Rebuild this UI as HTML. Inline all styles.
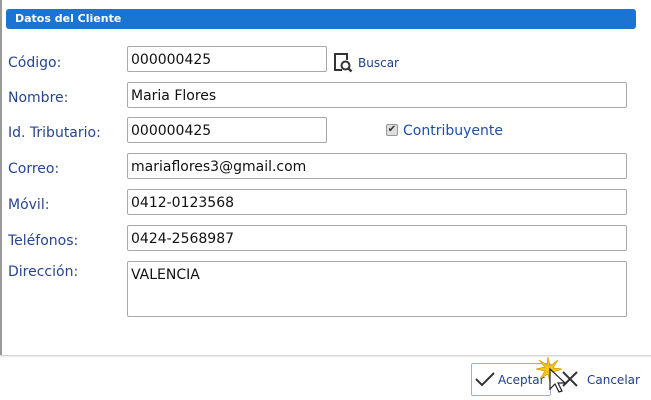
<!DOCTYPE html>
<html><head><meta charset="utf-8"><style>
*{margin:0;padding:0;box-sizing:border-box}
body{width:651px;height:400px;background:#fff;position:relative;overflow:hidden;font-family:"DejaVu Sans","Liberation Sans",sans-serif}
.lb{position:absolute;left:0;top:0;width:2px;height:356px;background:#999}
.hdr{position:absolute;left:6px;top:9px;width:630px;height:20px;background:#1a74d2;border-radius:3px;color:#fff;font-weight:bold;font-size:11px;line-height:20px;padding-left:9px}
.l{position:absolute;left:8px;font-size:14px;color:#27458f}
.i{position:absolute;left:127px;height:26px;border:1px solid #a8a8a8;border-radius:2px;font-size:14px;color:#111;padding:5px 0 0 3px;background:#fff}
.foot{position:absolute;left:0;top:355px;width:651px;height:3px;background:linear-gradient(#ccc,#eee,#fff)}
</style></head><body>
<div class="lb"></div>
<div class="hdr">Datos del Cliente</div>
<div class="l" style="top:55px">Código:</div>
<div class="i" style="top:46px;width:200px">000000425</div>
<svg style="position:absolute;left:333px;top:52px" width="21" height="22" viewBox="0 0 21 22"><path d="M9 18H2V2h12v6" fill="none" stroke="#333" stroke-width="2"/><circle cx="12.5" cy="13.5" r="4" fill="none" stroke="#333" stroke-width="2"/><path d="M15.5 16.5l3 3" stroke="#333" stroke-width="2.4"/></svg>
<div style="position:absolute;left:358px;top:56px;font-size:12px;color:#1d3f8a">Buscar</div>
<div class="l" style="top:90px">Nombre:</div>
<div class="i" style="top:82px;width:500px">Maria Flores</div>
<div class="l" style="top:125px">Id. Tributario:</div>
<div class="i" style="top:117px;width:200px">000000425</div>
<div style="position:absolute;left:386px;top:124px;width:12px;height:12px;background:#ddd;border:1px solid #999;border-radius:2px;font-size:10px;line-height:10px;text-align:center;color:#333">✔</div>
<div style="position:absolute;left:403px;top:123px;font-size:14px;color:#1d4fa8">Contribuyente</div>
<div class="l" style="top:161px">Correo:</div>
<div class="i" style="top:153px;width:500px">mariaflores3@gmail.com</div>
<div class="l" style="top:197px">Móvil:</div>
<div class="i" style="top:189px;width:500px">0412-0123568</div>
<div class="l" style="top:233px">Teléfonos:</div>
<div class="i" style="top:225px;width:500px">0424-2568987</div>
<div class="l" style="top:264px">Dirección:</div>
<div class="i" style="top:261px;width:500px;height:56px">VALENCIA</div>
<div class="foot"></div>
<div style="position:absolute;left:471px;top:363px;width:80px;height:33px;border:1px solid #8ab4f0;border-radius:2px"></div>
<svg style="position:absolute;left:474px;top:370px" width="22" height="18"><path d="M2 9l6 6L20 3" fill="none" stroke="#333" stroke-width="2"/></svg>
<div style="position:absolute;left:498px;top:373px;font-size:12px;color:#1d3f8a">Aceptar</div>
<svg style="position:absolute;left:560px;top:369px" width="20" height="20"><path d="M3 3l14 14M17 3L3 17" stroke="#333" stroke-width="2"/></svg>
<div style="position:absolute;left:587px;top:373px;font-size:12px;color:#1d3f8a">Cancelar</div>
<svg style="position:absolute;left:536px;top:355px" width="40" height="45"><path d="M12 2l2 9 8-6-5 8 9 1-9 3 5 7-7-5-1 9-2-9-8 5 5-8-9-2 9-2-6-7 8 5z" fill="#f5c518" stroke="#d49a00" stroke-width=".7"/><path d="M14 14v20l5-5 4 8 3-1-4-8h7z" fill="#fff" stroke="#222" stroke-width="1.2"/></svg>
</body></html>
